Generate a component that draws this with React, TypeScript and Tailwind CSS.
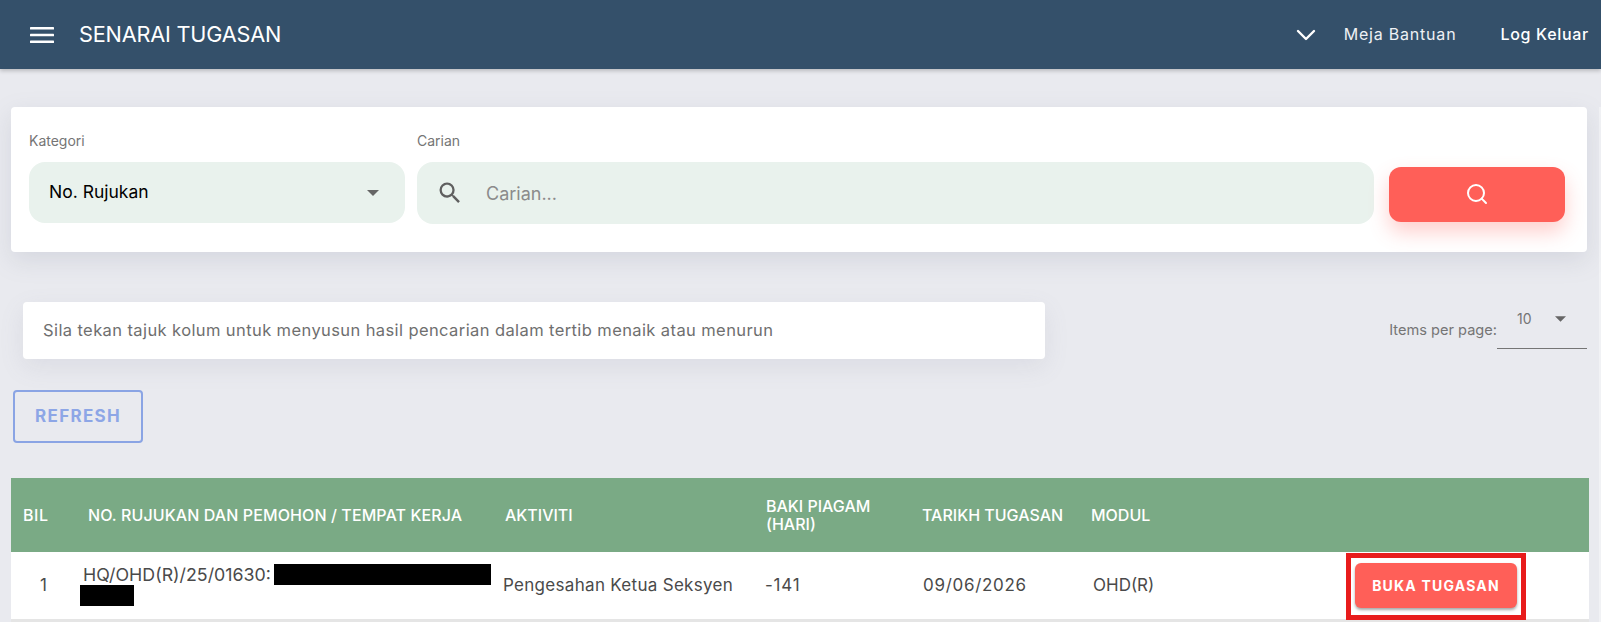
import { ChevronDown, Search } from "lucide-react";

const font = "font-['Inter','Noto_Sans',sans-serif]";

const headers = [
  { label: "BIL", cls: "w-[64px] pl-3 tracking-[0.6px]" },
  { label: "NO. RUJUKAN DAN PEMOHON / TEMPAT KERJA", cls: "w-[418px] pl-[13px] tracking-[0.1px]" },
  { label: "AKTIVITI", cls: "w-[262px] pl-3" },
  { label: "BAKI PIAGAM (HARI)", cls: "w-[156px] pl-[11px] pr-8" },
  { label: "TARIKH TUGASAN", cls: "w-[169px] pl-[11px]" },
  { label: "MODUL", cls: "w-[260px] pl-[11px]" },
  { label: "", cls: "" },
];

function Caret({ className }: { className: string }) {
  return (
    <svg viewBox="0 0 12 6" className={className} fill="currentColor">
      <path d="M0 0h12L6 6z" />
    </svg>
  );
}

function MatSearch({ className }: { className: string }) {
  return (
    <svg viewBox="0 0 24 24" className={className} fill="currentColor">
      <path d="M15.5 14h-.79l-.28-.27A6.471 6.471 0 0 0 16 9.5 6.5 6.5 0 1 0 9.5 16c1.61 0 3.09-.59 4.23-1.57l.27.28v.79l5 4.99L20.49 19l-4.99-5zm-6 0C7.01 14 5 11.99 5 9.5S7.01 5 9.5 5 14 7.01 14 9.5 11.99 14 9.5 14z" />
    </svg>
  );
}

function Topbar() {
  return (
    <header className="relative flex h-[69px] items-center bg-[#34506a] pl-[30px] pr-3 text-white shadow-[0_2px_4px_rgba(0,0,0,0.2)]">
      <svg viewBox="0 0 24 16" className="h-4 w-6" fill="currentColor">
        <rect width="24" height="2.6" rx="0.6" />
        <rect y="6.7" width="24" height="2.6" rx="0.6" />
        <rect y="13.4" width="24" height="2.6" rx="0.6" />
      </svg>
      <h1 className="ml-[25px] text-[21.7px] font-normal tracking-[-0.2px]">SENARAI TUGASAN</h1>
      <ChevronDown className="ml-auto h-8 w-8" strokeWidth={1.8} />
      <span className="ml-[22px] pb-0.5 text-[16px] tracking-[0.8px] text-[#eef1f4]">Meja Bantuan</span>
      <span className="ml-11 pb-0.5 text-[16px] font-medium tracking-[0.7px]">Log Keluar</span>
    </header>
  );
}

function SearchCard() {
  return (
    <section className="ml-[11px] mt-[38px] flex h-[145px] w-[1576px] items-start rounded bg-white pl-[18px] pt-[26px] shadow-[0_8px_24px_rgba(120,125,150,0.18)]">
      <div className="w-[388px]">
        <label className="block text-[14px] leading-4 text-[#757575]">Kategori</label>
        <div className="mt-[13px] flex h-[61px] w-[376px] items-center justify-between rounded-2xl bg-[#e9f2ed] pl-5 pr-[26px] text-[17.5px] text-black">
          No. Rujukan
          <Caret className="h-[6px] w-3 text-[#666]" />
        </div>
      </div>
      <div className="w-[957px]">
        <label className="block text-[14px] leading-4 text-[#757575]">Carian</label>
        <div className="mt-[13px] flex h-[62px] items-center rounded-2xl bg-[#e9f2ed] pl-[19px] text-[18px] text-[#8b8b8b]">
          <MatSearch className="h-7 w-7 text-[#5f5f5f]" />
          <span className="ml-[22px]">Carian...</span>
        </div>
      </div>
      <button className="ml-[15px] mt-[34px] flex h-[55px] w-[176px] items-center justify-center rounded-xl bg-[#ff5f58] text-white shadow-[0_10px_20px_rgba(255,95,88,0.3)]">
        <Search className="h-6 w-6 -translate-y-px" strokeWidth={2} />
      </button>
    </section>
  );
}

function InfoRow() {
  return (
    <div className="ml-[23px] mt-[50px] flex w-[1564px] items-start justify-between">
      <div className="flex h-[57px] w-[1022px] items-center rounded bg-white pl-5 text-[16.5px] tracking-[0.4px] text-[#6f6f6f] shadow-[0_8px_24px_rgba(120,125,150,0.12)]">
        Sila tekan tajuk kolum untuk menyusun hasil pencarian dalam tertib menaik atau menurun
      </div>
      <div className="flex items-start text-[#757575]">
        <span className="mt-5 text-[14.6px] leading-4">Items per page:</span>
        <div className="flex h-[47px] w-[90px] items-start justify-between border-b border-[#757575] pl-5 pr-[21px] pt-[8px] text-[14px] leading-[18px]">
          10
          <Caret className="mt-[6px] h-[6px] w-[11px] text-[#666]" />
        </div>
      </div>
    </div>
  );
}

function TaskTable() {
  return (
    <table className="ml-[11px] mt-[35px] w-[1578px] table-fixed border-collapse text-left shadow-[0_3px_0_#e5e5e5]">
      <thead>
        <tr className="h-[74px] bg-[#7aaa85] text-[16px] leading-[18px] text-white">
          {headers.map((h, i) => (
            <th key={i} className={`${h.cls} font-medium`}>
              {h.label}
            </th>
          ))}
        </tr>
      </thead>
      <tbody>
        <tr className="h-[67px] bg-white text-[17px] text-[#4a4a4a]">
          <td className="pl-[29px]">1</td>
          <td className="pl-[5px] align-top">
            <div className="pt-3">
              <div className="flex h-[21px] items-center">
                <span className="ml-[3px] w-[191px] whitespace-nowrap text-[17.8px] leading-[21px]">HQ/OHD(R)/25/01630:</span>
                <span className="h-[21px] w-[217px] bg-black" />
              </div>
              <div className="h-[21px] w-[54px] bg-black" />
            </div>
          </td>
          <td className="pl-[10px] tracking-[0.3px]">Pengesahan Ketua Seksyen</td>
          <td className="pl-[10px] tracking-[0.8px]">-141</td>
          <td className="pl-3 tracking-[0.7px]">09/06/2026</td>
          <td className="pl-[13px]">OHD(R)</td>
          <td className="pl-[6px] align-top">
            <div className="-mb-px mt-px flex h-[67px] w-[180px] items-center justify-center border-[5px] border-[#e81c1c] bg-white">
              <button className="h-[45px] w-[162px] -translate-y-px rounded-md bg-[#ff5f58] text-[14px] font-bold tracking-[1.2px] text-white shadow-[0_2px_3px_rgba(0,0,0,0.35)]">
                BUKA TUGASAN
              </button>
            </div>
          </td>
        </tr>
      </tbody>
    </table>
  );
}

export default function App() {
  return (
    <div className={`h-[622px] overflow-hidden bg-[#e9eaef] ${font}`}>
      <Topbar />
      <main className="h-[553px] border-r-2 border-[#f1f2f5]">
        <SearchCard />
        <InfoRow />
        <button className="ml-[13px] mt-[31px] block h-[53px] w-[130px] rounded border-2 border-[#8aa4e4] text-[17px] font-bold tracking-[1.3px] text-[#8da6e6]">
          REFRESH
        </button>
        <TaskTable />
      </main>
    </div>
  );
}
